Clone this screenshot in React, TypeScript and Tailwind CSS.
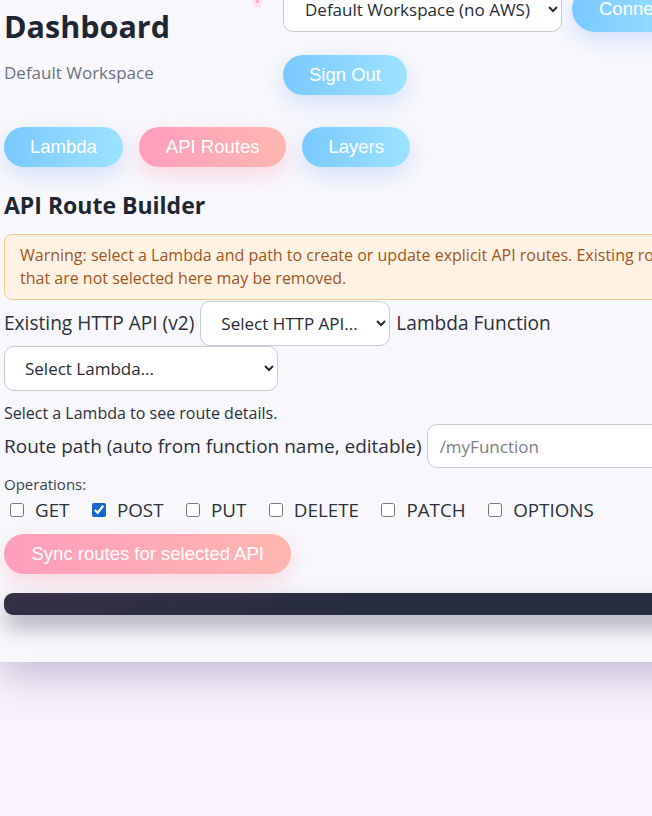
import { useState } from "react";

const sans = "font-['Open_Sans','Noto_Sans',sans-serif]";
const btnFont = "font-['Liberation_Sans',Arial,sans-serif]";

const blueBtn =
  "bg-gradient-to-r from-[#7ac8ff] to-[#9de2ff] shadow-[0_8px_22px_rgba(110,160,250,0.28)]";
const pinkBtn =
  "bg-gradient-to-r from-[#ff9dbd] to-[#ffb6b0] shadow-[0_8px_22px_rgba(255,140,170,0.3)]";

function PillButton({
  label,
  tone,
  pad = "px-[26px]",
}: {
  label: string;
  tone: "blue" | "pink";
  pad?: string;
}) {
  return (
    <button
      className={`${btnFont} ${tone === "blue" ? blueBtn : pinkBtn} ${pad} h-10 rounded-full text-[18.5px] text-white whitespace-nowrap`}
    >
      {label}
    </button>
  );
}

const METHODS = ["GET", "POST", "PUT", "DELETE", "PATCH", "OPTIONS"];

export default function App() {
  const [ops, setOps] = useState<Record<string, boolean>>({ POST: true });

  return (
    <div className={`${sans} relative min-h-screen overflow-hidden bg-gradient-to-b from-[#f1eef8] to-[#fbf3fe]`}>
      {/* tiny pink blob peeking at the top */}
      <div className="absolute left-[253px] top-[-5px] z-10 flex h-[13px] w-[9px] items-center justify-center rounded-full bg-[#ffe1ec]">
        <div className="h-[3px] w-[3px] rounded-full bg-[#ff9dbd]" />
      </div>

      <div className="-mt-[14px] w-[760px] bg-[#f8f8fc] pb-[47px] pl-[4px] shadow-[0_12px_40px_rgba(60,50,110,0.3)]">
        <div className="w-[716px]">
          {/* Header */}
          <div className="flex items-start">
            <div className="w-[279px]">
              <h1 className="mt-[22px] text-[30.5px] font-bold leading-[36px] text-[#1e2632]">Dashboard</h1>
              <p className="mt-[17px] text-[17px] leading-[24px] text-[#6b7280]">Default Workspace</p>
            </div>
            <div className="flex w-[420px] flex-wrap gap-x-[10px] gap-y-[23px]">
              <select className="h-[46px] w-[279px] rounded-[10px] border border-[#c6cad4] bg-white pl-[17px] pr-[10px] text-[17px] text-[#262b35]">
                <option>Default Workspace (no AWS)</option>
              </select>
              <button
                className={`${btnFont} ${blueBtn} h-[46px] rounded-full px-[27px] text-[18.5px] text-white`}
              >
                Connect
              </button>
              <PillButton label="Sign Out" tone="blue" />
            </div>
          </div>

          {/* Tabs */}
          <div className="mt-[32px] flex gap-4">
            <PillButton label="Lambda" tone="blue" />
            <PillButton label="API Routes" tone="pink" pad="px-[27px]" />
            <PillButton label="Layers" tone="blue" />
          </div>

          <h2 className="mt-[24px] text-[23px] font-bold leading-[28px] text-[#1e2632]">API Route Builder</h2>

          <div className="mt-[15px] rounded-[8px] border border-[#f4c989] bg-[#fff2e4] px-[15px] py-[9px] text-[16px] leading-[23px] text-[#a0561d]">
            Warning: select a Lambda and path to create or update explicit API routes. Existing routes
            that are not selected here may be removed.
          </div>

          <div className="mt-[1px] flex flex-wrap items-center gap-x-[6px] text-[19.1px] text-[#2b303b]">
            <span>Existing HTTP API (v2)</span>
            <select className="h-[45px] w-[190px] rounded-[10px] border border-[#c6cad4] bg-white pl-[16px] pr-[8px] text-[17px] text-[#262b35]">
              <option>Select HTTP API...</option>
            </select>
            <span>Lambda Function</span>
            <select className="h-[45px] w-[274px] rounded-[10px] border border-[#c6cad4] bg-white pl-[16px] pr-[8px] text-[17px] text-[#262b35]">
              <option>Select Lambda...</option>
            </select>
          </div>

          <p className="mt-[12px] text-[16px] leading-[21px] text-[#2b303b]">Select a Lambda to see route details.</p>

          <div className="flex items-center gap-x-[5px] text-[19px] text-[#2b303b]">
            <span>Route path (auto from function name, editable)</span>
            <input
              placeholder="/myFunction"
              className="h-[44px] flex-1 rounded-[10px] border border-[#c6cad4] bg-white px-[12px] text-[17px] text-[#262b35] placeholder:text-[#7d8088] outline-none"
            />
          </div>

          <p className="mt-[5px] text-[15px] leading-[22px] text-[#3a3f4a]">Operations:</p>

          <div className="mt-[2px] flex gap-x-[22.5px] pl-[6px] text-[18.8px] leading-[26px] text-[#2b303b]">
            {METHODS.map((m) => (
              <label key={m} className="flex items-center gap-x-[11px]">
                <input
                  type="checkbox"
                  checked={!!ops[m]}
                  onChange={() => setOps({ ...ops, [m]: !ops[m] })}
                  className="m-0 h-[14px] w-[14px] accent-[#1766d0]"
                />
                <span>{m}</span>
              </label>
            ))}
          </div>

          <div className="mt-[11px]">
            <PillButton label="Sync routes for selected API" tone="pink" pad="px-[27.5px]" />
          </div>

          <div className="mt-[19px] h-[22px] rounded-[9px] bg-gradient-to-r from-[#332f45] via-[#272d41] to-[#272d41] shadow-[0_12px_22px_rgba(25,30,50,0.35)]" />
        </div>
      </div>
    </div>
  );
}
